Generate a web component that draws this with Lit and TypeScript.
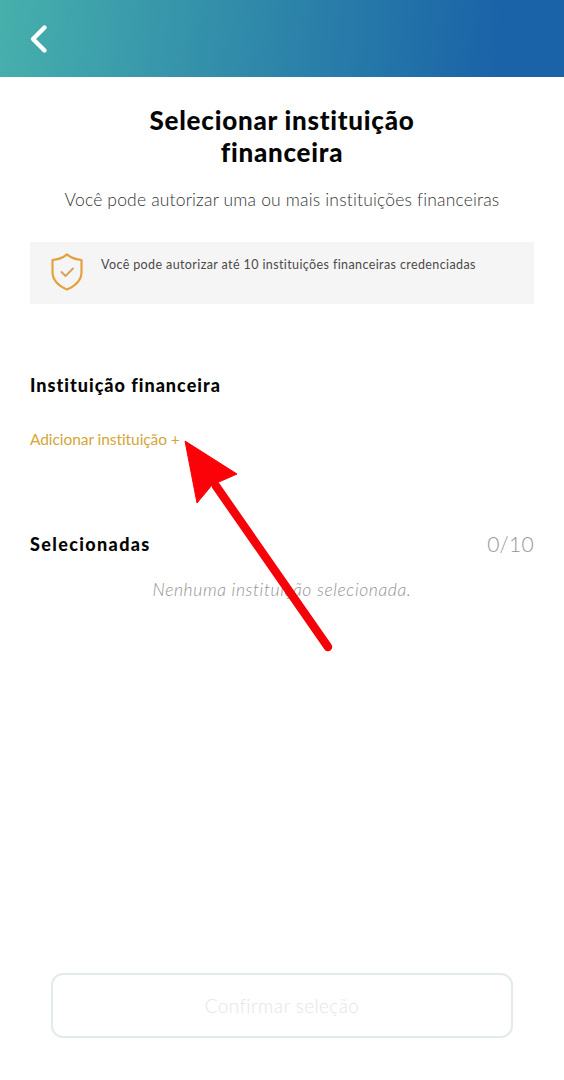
import { LitElement, html, css } from "lit";
import { customElement } from "lit/decorators.js";

@customElement("app-root")
export class AppRoot extends LitElement {
  static styles = css`
    :host {
      display: block;
      position: relative;
      width: 564px;
      height: 1080px;
      overflow: hidden;
      background: #fff;
      font-family: "Lato", "Liberation Sans", sans-serif;
      color: #000;
    }
    .page { display: flex; flex-direction: column; height: 100%; }
    .header {
      height: 77px;
      flex: none;
      display: flex;
      align-items: center;
      padding-left: 28px;
      box-sizing: border-box;
      background: linear-gradient(95deg, #46b0ac 0%, #1a63a8 88%, #1a63a8 100%);
    }
    .back { display: block; width: 22px; height: 30px; }
    .title {
      margin: 27px auto 0;
      width: 300px;
      text-align: center;
      font-size: 26px;
      line-height: 32px;
      font-weight: 900;
      letter-spacing: 0.75px;
      color: #050505;
    }
    .sub {
      margin: 20px 0 0;
      text-align: center;
      font-size: 17.5px;
      line-height: 24px;
      letter-spacing: 0.17px;
      color: #333;
      font-weight: 300;
    }
    .note {
      margin: 30px 30px 0;
      height: 62px;
      box-sizing: border-box;
      background: #f6f5f5;
      display: flex;
      align-items: flex-start;
      padding: 10px 0 0 20px;
      gap: 17px;
    }
    .shield { width: 34px; height: 40px; flex: none; }
    .note span {
      font-size: 12.5px;
      line-height: 16px;
      margin-top: 5px;
      color: #4a4a4a;
      letter-spacing: 0.39px;
    }
    .h {
      font-size: 18px;
      font-weight: 900;
      line-height: 24px;
      letter-spacing: 1px;
      color: #050505;
    }
    .sel { letter-spacing: 1.35px; }
    .inst { margin: 69px 30px 0; }
    .link {
      margin: 32px 30px 0;
      font-size: 15.5px;
      line-height: 20px;
      color: #d5a537;
      letter-spacing: -0.07px;
      font-weight: 400;
    }
    .sel-row {
      margin: 83px 30px 0;
      display: flex;
      justify-content: space-between;
      align-items: center;
    }
    .count { font-size: 21px; line-height: 24px; color: #949494; font-weight: 300; letter-spacing: 0.3px; }
    .empty {
      margin: 22px 0 0;
      text-align: center;
      font-size: 17.5px;
      line-height: 24px;
      font-style: italic;
      color: #929292;
      font-weight: 300;
      letter-spacing: 0.62px;
    }
    .spacer { flex: 1; }
    .btn {
      margin: 0 51px 42px;
      height: 65px;
      box-sizing: border-box;
      border: 2px solid #e2eaea;
      border-radius: 12px;
      display: flex;
      align-items: center;
      justify-content: center;
      font-size: 19px;
      color: #e3e6e6;
      letter-spacing: 0.4px;
      font-weight: 300;
      background: #fff;
    }
    .arrow { position: absolute; left: 0; top: 0; width: 564px; height: 1080px; pointer-events: none; }
  `;

  render() {
    return html`
      <div class="page">
        <div class="header">
          <svg class="back" viewBox="0 0 22 30" fill="none">
            <path d="M16.5 3.5 L5 15 L16.5 26.5" stroke="#fff" stroke-width="4.4" stroke-linecap="round" stroke-linejoin="round"/>
          </svg>
        </div>
        <div class="title">Selecionar instituição financeira</div>
        <p class="sub">Você pode autorizar uma ou mais instituições financeiras</p>
        <div class="note">
          <svg class="shield" viewBox="0 0 34 40" fill="none" stroke="#e5a23c">
            <path d="M17 2.5 C21 5.5 26 7.5 31.5 8 V20 C31.5 28 25 34 17 37.5 C9 34 2.5 28 2.5 20 V8 C8 7.5 13 5.5 17 2.5 Z" stroke-width="2.2" stroke-linejoin="round"/>
            <path d="M11.5 20 L15.5 24 L23 16.5" stroke-width="1.8" stroke-linecap="round" stroke-linejoin="round" stroke="#d9a050"/>
          </svg>
          <span>Você pode autorizar até 10 instituições financeiras credenciadas</span>
        </div>
        <div class="h inst">Instituição financeira</div>
        <div class="link">Adicionar instituição +</div>
        <div class="sel-row">
          <div class="h sel">Selecionadas</div>
          <div class="count">0/10</div>
        </div>
        <p class="empty">Nenhuma instituição selecionada.</p>
        <div class="spacer"></div>
        <div class="btn">Confirmar seleção</div>
      </div>
      <svg class="arrow" viewBox="0 0 564 1080">
        <path d="M328 647 L216 486" stroke="#f60309" stroke-width="8.5" stroke-linecap="round" fill="none"/>
        <path d="M185 441 L237 474 L212 485 L197 503 Z" fill="#fb0208" stroke="#fb0208" stroke-width="1" stroke-linejoin="round"/>
      </svg>
    `;
  }
}
